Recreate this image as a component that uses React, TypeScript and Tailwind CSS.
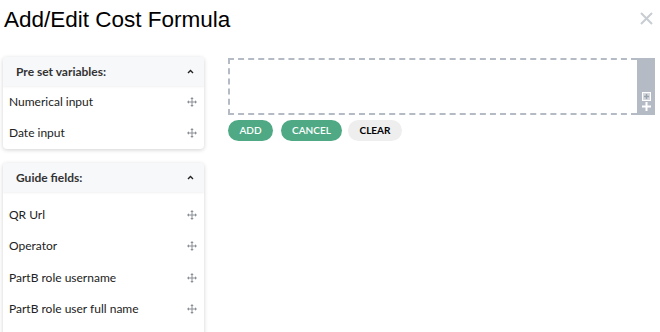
import React from "react";

const presets = ["Numerical input", "Date input"];
const guideFields = ["QR Url", "Operator", "PartB role username", "PartB role user full name"];

function MoveIcon() {
  return (
    <svg width="10" height="10" viewBox="0 0 10 10" className="text-[#8a8f96]">
      <path d="M5 0 L3.3 2 H6.7 Z M5 10 L3.3 8 H6.7 Z M0 5 L2 3.3 V6.7 Z M10 5 L8 3.3 V6.7 Z" fill="currentColor" />
      <path d="M5 1.5 V8.5 M1.5 5 H8.5" stroke="currentColor" strokeWidth="1" />
    </svg>
  );
}

function ChevronUp() {
  return (
    <svg width="7" height="5" viewBox="0 0 7 5">
      <path d="M1 4 L3.5 1.5 L6 4" stroke="#222" strokeWidth="1.4" fill="none" />
    </svg>
  );
}

function Panel({ title, items, padTop }: { title: string; items: string[]; padTop?: boolean }) {
  return (
    <div className="w-[201px] rounded-[4px] bg-white shadow-[0_1px_4px_rgba(0,0,0,0.18)] overflow-hidden">
      <div className="h-[29px] flex items-center justify-between pl-[13px] pr-[10px] bg-[#f7f8fa] shadow-[0_1px_2px_rgba(0,0,0,0.06)]">
        <span className="text-[12px] font-bold text-[#333]">{title}</span>
        <ChevronUp />
      </div>
      <ul className={padTop ? "pt-[7px] pb-[30px]" : ""}>
        {items.map((item) => (
          <li key={item} className="h-[31.5px] flex items-center justify-between pl-[6px] pr-[7px]">
            <span className="text-[12px] text-[#222]">{item}</span>
            <MoveIcon />
          </li>
        ))}
      </ul>
    </div>
  );
}

export default function App() {
  return (
    <div className="w-[660px] h-[332px] overflow-hidden bg-white relative font-['Lato',sans-serif]">
      <h1 className="pt-[7px] pl-[4px] text-[22.5px] leading-[26px] text-black font-['Liberation_Sans',Arial,sans-serif]">
        Add/Edit Cost Formula
      </h1>
      <button className="absolute top-[12px] right-[7px] text-[#c8cdd3]" aria-label="Close">
        <svg width="13" height="13" viewBox="0 0 13 13">
          <path d="M1 1 L12 12 M12 1 L1 12" stroke="currentColor" strokeWidth="2" />
        </svg>
      </button>

      <div className="flex mt-[24px]">
        <div className="ml-[3px] flex flex-col gap-[14px]">
          <Panel title="Pre set variables:" items={presets} />
          <Panel title="Guide fields:" items={guideFields} padTop />
        </div>

        <div className="ml-[24px] pt-[1px]">
          <div className="flex w-[427px] h-[57px]">
            <div className="flex-1 border-2 border-dashed border-[#b4bbc4] border-r-0" />
            <div className="w-[18px] bg-[#b4bbc4] flex flex-col items-center justify-end pb-[4px] gap-[1px]">
              <div className="w-[9px] h-[9px] border border-white bg-[#d5d9de] flex items-center justify-center">
                <svg width="7" height="7" viewBox="0 0 7 7">
                  <path d="M3.5 1 V6 M1 3.5 H6" stroke="#9aa2ad" strokeWidth="1.5" />
                </svg>
              </div>
              <svg width="9" height="9" viewBox="0 0 9 9">
                <path d="M4.5 0 V9 M0 4.5 H9" stroke="white" strokeWidth="2" />
              </svg>
            </div>
          </div>
          <div className="flex mt-[5px]">
            <button className="h-[21px] w-[45px] rounded-full bg-[#4fa985] text-white text-[10px] font-semibold">ADD</button>
            <button className="h-[21px] w-[61px] ml-[8px] rounded-full bg-[#4fa985] text-white text-[10px] font-semibold">CANCEL</button>
            <button className="h-[21px] w-[54px] ml-[6px] rounded-full bg-[#eeeeee] text-black text-[10px] font-bold">CLEAR</button>
          </div>
        </div>
      </div>
    </div>
  );
}
